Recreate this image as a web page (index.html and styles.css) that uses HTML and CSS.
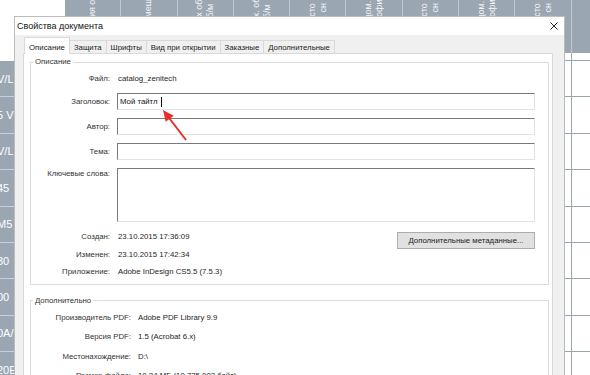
FILE: index.html
```html
<!DOCTYPE html>
<html lang="ru">
<head>
    <meta charset="UTF-8">
    <meta name="viewport" content="width=device-width, initial-scale=1.0">
    <title>Свойства документа</title>
    <link rel="stylesheet" href="styles.css">
</head>
<body>
    <div id="screen">
        <div class="sheet">
            <div class="row head-row">
                <div class="corner"></div>
                <div class="hd"><span>Категория отеля</span></div>
                <div class="hd"><span>Тип размещения</span></div>
                <div class="hd"><span>Цена 2-х об.<br>номер, б/м</span></div>
                <div class="hd"><span>Цена 3-х. об.<br>номер, б/м</span></div>
                <div class="hd"><span>Доп. место<br>без доп. сн</span></div>
                <div class="hd"><span>Цена одом.<br>Цена о офис</span></div>
                <div class="hd"><span>Доп. место<br>без доп. сн</span></div>
                <div class="hd"><span>Цена одом.<br>Цена о офис</span></div>
                <div class="hd"><span>Доп. место<br>без доп. сн</span></div>
                <div class="hd"><span>Примечание</span></div>
            </div>
            <div class="row gap-row">
                <span class="first"></span><span></span><span></span><span></span><span></span><span></span><span></span><span></span><span></span><span></span><span></span>
            </div>
            <div class="row"><div class="rh"><span>V/L</span></div><span class="c"></span><span class="c"></span><span class="c"></span><span class="c"></span><span class="c"></span><span class="c"></span><span class="c"></span><span class="c"></span><span class="c"></span><span class="c"></span></div>
            <div class="row"><div class="rh"><span>5 V</span></div><span class="c"></span><span class="c"></span><span class="c"></span><span class="c"></span><span class="c"></span><span class="c"></span><span class="c"></span><span class="c"></span><span class="c"></span><span class="c"></span></div>
            <div class="row"><div class="rh"><span>V/L</span></div><span class="c"></span><span class="c"></span><span class="c"></span><span class="c"></span><span class="c"></span><span class="c"></span><span class="c"></span><span class="c"></span><span class="c"></span><span class="c"></span></div>
            <div class="row"><div class="rh"><span>45</span></div><span class="c"></span><span class="c"></span><span class="c"></span><span class="c"></span><span class="c"></span><span class="c"></span><span class="c"></span><span class="c"></span><span class="c"></span><span class="c"></span></div>
            <div class="row"><div class="rh"><span>M5</span></div><span class="c"></span><span class="c"></span><span class="c"></span><span class="c"></span><span class="c"></span><span class="c"></span><span class="c"></span><span class="c"></span><span class="c"></span><span class="c"></span></div>
            <div class="row"><div class="rh"><span>30</span></div><span class="c"></span><span class="c"></span><span class="c"></span><span class="c"></span><span class="c"></span><span class="c"></span><span class="c"></span><span class="c"></span><span class="c"></span><span class="c"></span></div>
            <div class="row"><div class="rh"><span>00</span></div><span class="c"></span><span class="c"></span><span class="c"></span><span class="c"></span><span class="c"></span><span class="c"></span><span class="c"></span><span class="c"></span><span class="c"></span><span class="c"></span></div>
            <div class="row"><div class="rh"><span>0A/</span></div><span class="c"></span><span class="c"></span><span class="c"></span><span class="c"></span><span class="c"></span><span class="c"></span><span class="c"></span><span class="c"></span><span class="c"></span><span class="c"></span></div>
            <div class="row"><div class="rh"><span>20E</span></div><span class="c"></span><span class="c"></span><span class="c"></span><span class="c"></span><span class="c"></span><span class="c"></span><span class="c"></span><span class="c"></span><span class="c"></span><span class="c"></span></div>
        </div>

        <div class="dialog">
            <div class="titlebar">
                <span>Свойства документа</span>
                <svg class="close" width="8" height="8" viewBox="0 0 8 8">
                    <path d="M0.5 0.5 L7.5 7.5 M7.5 0.5 L0.5 7.5" stroke="#222" stroke-width="1" fill="none"/>
                </svg>
            </div>
            <div class="dlg-body">
                <div class="tabs">
                    <div class="tab active">Описание</div>
                    <div class="tab">Защита</div>
                    <div class="tab">Шрифты</div>
                    <div class="tab">Вид при открытии</div>
                    <div class="tab">Заказные</div>
                    <div class="tab">Дополнительные</div>
                </div>
                <div class="panel">
                    <fieldset class="group">
                        <legend>Описание</legend>
                        <div class="field first">
                            <span class="lbl">Файл:</span>
                            <span class="val">catalog_zenitech</span>
                        </div>
                        <div class="field">
                            <span class="lbl">Заголовок:</span>
                            <div class="box">Мой тайтл<span class="caret"></span></div>
                        </div>
                        <div class="field">
                            <span class="lbl">Автор:</span>
                            <div class="box"></div>
                        </div>
                        <div class="field">
                            <span class="lbl">Тема:</span>
                            <div class="box"></div>
                        </div>
                        <div class="field keywords">
                            <span class="lbl">Ключевые слова:</span>
                            <div class="box area"></div>
                        </div>
                        <div class="dates">
                            <span class="lbl">Создан:</span>
                            <span class="val">23.10.2015 17:36:09</span>
                            <div class="btn">Дополнительные метаданные...</div>
                            <span class="lbl">Изменен:</span>
                            <span class="val">23.10.2015 17:42:34</span>
                            <span class="lbl">Приложение:</span>
                            <span class="val">Adobe InDesign CS5.5 (7.5.3)</span>
                        </div>
                    </fieldset>

                    <fieldset class="group extra">
                        <legend>Дополнительно</legend>
                        <div class="info"><span class="lbl">Производитель PDF:</span><span class="val">Adobe PDF Library 9.9</span></div>
                        <div class="info"><span class="lbl">Версия PDF:</span><span class="val">1.5 (Acrobat 6.x)</span></div>
                        <div class="info"><span class="lbl">Местонахождение:</span><span class="val">D:\</span></div>
                        <div class="info"><span class="lbl">Размер файла:</span><span class="val">10.24 МБ (10.735.003 байт)</span></div>
                    </fieldset>
                </div>
            </div>
        </div>

        <svg class="arrow" width="45" height="45" viewBox="0 0 45 45">
            <line x1="36" y1="40" x2="19.5" y2="18.5" stroke="#e8302a" stroke-width="2"/>
            <polygon points="13,10 23.7,15.7 15.7,21.8" fill="#e8302a"/>
        </svg>
    </div>
</body>
</html>
```

FILE: styles.css
```css
* {
    box-sizing: border-box;
}
body {
    margin: 0;
    background-color: #fff;
}
#screen {
    width: 590px;
    height: 375px;
    overflow: hidden;
    position: relative;
    background-color: #fff;
    font-family: "Liberation Sans", Arial, sans-serif;
}

/* background sheet */
.sheet .row {
    display: grid;
    grid-template-columns: 65px repeat(10, 56.3px);
    height: 36.4px;
}
.sheet .head-row {
    height: 53px;
}
.sheet .gap-row {
    height: 8px;
}
.sheet .gap-row span {
    border-right: 1px solid #9aa5b2;
    border-bottom: 1px solid #9aa5b2;
}
.sheet .gap-row .first {
    border: 0;
}
.corner {
    background-color: #fff;
}
.hd {
    background-color: #9ba6b3;
    border-right: 1px solid #c3cad2;
    display: flex;
    justify-content: center;
    align-items: flex-end;
    overflow: hidden;
    color: #f3f5f7;
    font-size: 9px;
    line-height: 11px;
}
.hd span {
    writing-mode: vertical-rl;
    transform: rotate(180deg);
    white-space: nowrap;
    padding-top: 4px;
}
.rh {
    background-color: #9ba6b3;
    border-bottom: 1px solid #c9d0d7;
    color: #fff;
    font-size: 11px;
    display: flex;
    align-items: center;
    overflow: hidden;
}
.rh span {
    margin-left: -3px;
}
.c {
    border-right: 1px solid #9aa5b2;
    border-bottom: 1px solid #9aa5b2;
}

/* dialog */
.dialog {
    position: absolute;
    left: 14px;
    top: 16px;
    width: 551px;
    height: 365px;
    background-color: #f0f0f0;
    border: 1px solid #bcbcbc;
    display: flex;
    flex-direction: column;
}
.titlebar {
    flex: none;
    height: 18px;
    background-color: #fff;
    display: flex;
    align-items: center;
    justify-content: space-between;
    padding: 0 6px 0 2px;
    font-size: 9px;
    color: #111;
}
.dlg-body {
    flex: 1;
    display: flex;
    flex-direction: column;
    padding: 2px 11px 0 8px;
}
.tabs {
    flex: none;
    display: flex;
    align-items: flex-end;
    padding-left: 1px;
}
.tab {
    height: 13px;
    padding: 0 4px;
    display: flex;
    align-items: center;
    font-size: 7.8px;
    color: #222;
    background-color: #f0f0f0;
    border: 1px solid #d9d9d9;
    border-left: 0;
    border-bottom: 0;
}
.tab.active {
    height: 17px;
    padding: 2px 4px 0 4px;
    margin-bottom: -1px;
    background-color: #fff;
    border-left: 1px solid #d9d9d9;
    position: relative;
    z-index: 1;
}
.panel {
    flex: 1 0 auto;
    background-color: #fff;
    border: 1px solid #d9d9d9;
    padding: 0 3px 0 6px;
}

.group {
    margin: 2px 0 0 0;
    padding: 0 13px 3px 0;
    border: 1px solid #dcdcdc;
    min-width: 0;
    font-size: 7.8px;
    color: #262626;
}
.group legend {
    font-size: 7.8px;
    line-height: 12px;
    padding: 0 2px;
    margin-left: 2px;
    color: #333;
}
.lbl {
    width: 79px;
    flex: none;
    text-align: right;
    color: #333;
}
.val {
    padding-left: 1px;
}
.field {
    display: flex;
    align-items: center;
    margin-top: 8px;
}
.field .lbl {
    margin-right: 7px;
}
.field.first {
    height: 16px;
    margin-top: 2px;
}
.field.first + .field {
    margin-top: 7px;
}
.box {
    flex: 1;
    height: 17px;
    border: 1px solid;
    border-color: #7a7a7a #e3e3e3 #e3e3e3 #7a7a7a;
    padding-left: 2px;
    display: flex;
    align-items: center;
    color: #111;
}
.caret {
    display: inline-block;
    width: 1px;
    height: 10px;
    margin-left: 3px;
    background-color: #111;
}
.keywords {
    align-items: flex-start;
}
.keywords .lbl {
    line-height: 11px;
}
.box.area {
    height: 54px;
}
.dates {
    display: grid;
    grid-template-columns: 79px 1fr auto;
    grid-auto-rows: 17.5px;
    column-gap: 7px;
    align-items: center;
    margin-top: 6px;
}
.dates .btn {
    grid-column: 3;
    grid-row: 1 / span 2;
    align-self: start;
    margin-top: 4px;
    width: 138px;
    height: 17px;
    background-color: #e1e1e1;
    border: 1px solid #adadad;
    display: flex;
    align-items: center;
    justify-content: center;
    color: #222;
}
.group.extra {
    margin-top: 10px;
    padding: 1px 13px 20px 0;
}
.info {
    display: flex;
    align-items: center;
    height: 19.5px;
}
.info .lbl {
    width: 100px;
    margin-right: 6px;
}

.arrow {
    position: absolute;
    left: 150px;
    top: 100px;
}
```
